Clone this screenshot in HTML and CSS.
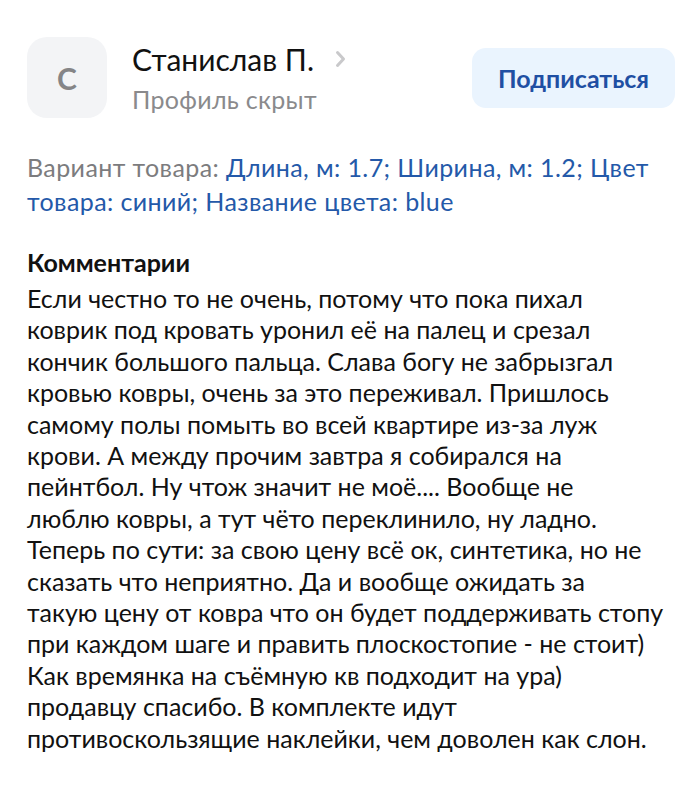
FILE: index.html
```html
<!DOCTYPE html>
<html lang="ru">

<head>
    <meta charset="UTF-8">
    <meta name="viewport" content="width=device-width, initial-scale=1.0">
    <title>Отзыв</title>
    <link rel="stylesheet" href="styles.css">
</head>

<body>
    <div class="review">
        <!-- Author -->
        <div class="author">
            <div class="avatar">С</div>
            <div class="author-info">
                <div class="author-name">
                    Станислав П.
                    <svg class="chevron" width="13" height="18" viewBox="0 0 13 18">
                        <path d="M3.5 2.5l6 6.5-6 6.5" fill="none" stroke="#c9c9cb" stroke-width="3" stroke-linecap="round" stroke-linejoin="round"/>
                    </svg>
                </div>
                <div class="author-status">Профиль скрыт</div>
            </div>
            <button class="subscribe">Подписаться</button>
        </div>

        <!-- Variant -->
        <p class="variant">
            Вариант товара: <span class="variant-value">Длина, м: 1.7; Ширина, м: 1.2; Цвет<br>товара: синий; Название цвета: blue</span>
        </p>

        <!-- Comment -->
        <h3 class="comments-title">Комментарии</h3>
        <p class="comment-text">
            Если честно то не очень, потому что пока пихал<br>
            коврик под кровать уронил её на палец и срезал<br>
            кончик большого пальца. Слава богу не забрызгал<br>
            кровью ковры, очень за это переживал. Пришлось<br>
            самому полы помыть во всей квартире из-за луж<br>
            крови. А между прочим завтра я собирался на<br>
            пейнтбол. Ну чтож значит не моё.... Вообще не<br>
            люблю ковры, а тут чёто переклинило, ну ладно.<br>
            Теперь по сути: за свою цену всё ок, синтетика, но не<br>
            сказать что неприятно. Да и вообще ожидать за<br>
            такую цену от ковра что он будет поддерживать стопу<br>
            при каждом шаге и править плоскостопие - не стоит)<br>
            Как времянка на съёмную кв подходит на ура)<br>
            продавцу спасибо. В комплекте идут<br>
            противоскользящие наклейки, чем доволен как слон.
        </p>
    </div>
</body>

</html>
```

FILE: styles.css
```css
/* Review card */
body {
    font-family: Lato, "Noto Sans", sans-serif;
    margin: 0;
    padding: 0;
    background-color: #fff;
    color: #111;
}

.review {
    padding: 37px 25px 20px 27px;
}

.author {
    display: flex;
    align-items: center;
    gap: 25px;
}

.avatar {
    width: 80px;
    height: 81px;
    border-radius: 20px;
    background-color: #f3f4f6;
    color: #858587;
    font-size: 30px;
    font-weight: 700;
    display: flex;
    align-items: center;
    justify-content: center;
    flex-shrink: 0;
}

.author-info {
    display: flex;
    flex-direction: column;
    gap: 7px;
}

.author-name {
    font-size: 30px;
    line-height: 36px;
    color: #111;
    display: flex;
    align-items: center;
    gap: 20px;
}

.author-status {
    font-size: 25px;
    line-height: 30px;
    color: #8a8a8c;
    letter-spacing: 0.3px;
}

.subscribe {
    margin-left: auto;
    width: 203px;
    height: 60px;
    border: none;
    border-radius: 14px;
    background-color: #eaf4fe;
    color: #1f4fa3;
    font-family: inherit;
    font-size: 25px;
    font-weight: 700;
}

.variant {
    margin: 32px 0 0;
    font-size: 25px;
    line-height: 34px;
    color: #7c7c7e;
    letter-spacing: 0.4px;
}

.variant-value {
    color: #2459a9;
}

.comments-title {
    margin: 29px 0 0;
    font-size: 25px;
    line-height: 30px;
    font-weight: 700;
}

.comment-text {
    margin: 6px 0 0;
    font-size: 25px;
    line-height: 31.4px;
    white-space: nowrap;
}
```
